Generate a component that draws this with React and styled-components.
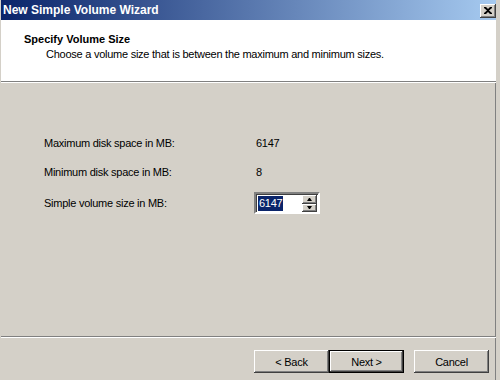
import styled, { createGlobalStyle } from "styled-components";

const GlobalStyle = createGlobalStyle`
  html, body {
    margin: 0;
    padding: 0;
    background: #d4d0c8;
  }
  body {
    font-family: "Liberation Sans", Arial, sans-serif;
    font-size: 11px;
    letter-spacing: -0.25px;
  }
`;

const rows = [
  { label: "Maximum disk space in MB:", value: "6147" },
  { label: "Minimum disk space in MB:", value: "8" },
];

function SpinArrow({ up }) {
  return (
    <svg width="5" height="3" viewBox="0 0 5 3">
      <path d={up ? "M2 0 L3 0 L5 3 L0 3 Z" : "M0 0 L5 0 L3 3 L2 3 Z"} fill="#000" />
    </svg>
  );
}

function App() {
  return (
    <>
      <GlobalStyle />
      <Window>
        <TitleBar>
          <span>New Simple Volume Wizard</span>
          <CloseButton>
            <svg width="8" height="7" viewBox="0 0 8 7">
              <path
                d="M0 0h2l2 2 2-2h2v1L5 3.5 8 6v1H6L4 5 2 7H0V6l3-2.5L0 1z"
                fill="#000"
              />
            </svg>
          </CloseButton>
        </TitleBar>
        <Header>
          <HeaderTitle>Specify Volume Size</HeaderTitle>
          <HeaderText>
            Choose a volume size that is between the maximum and minimum sizes.
          </HeaderText>
        </Header>
        <Etched />
        <Body>
          {rows.map((r) => (
            <Row key={r.label}>
              <Label>{r.label}</Label>
              <Value>{r.value}</Value>
            </Row>
          ))}
          <Row>
            <Label $offset={2}>Simple volume size in MB:</Label>
            <SpinBox>
              <Field>
                <Selected>6147</Selected>
              </Field>
              <SpinButtons>
                <SpinButton>
                  <SpinArrow up />
                </SpinButton>
                <SpinButton>
                  <SpinArrow />
                </SpinButton>
              </SpinButtons>
            </SpinBox>
          </Row>
        </Body>
        <Etched />
        <Footer>
          <Button>&lt; Back</Button>
          <Button $default>Next &gt;</Button>
          <Button $gap>Cancel</Button>
        </Footer>
      </Window>
    </>
  );
}

export default App;

const Window = styled.div`
  width: 500px;
  height: 380px;
  box-sizing: border-box;
  display: flex;
  flex-direction: column;
  background: #d4d0c8;
  border-left: 1px solid #d4d0c8;
  border-right: 4px solid #d4d0c8;
  box-shadow: inset -1px 0 0 #808080;
  overflow: hidden;
`;

const TitleBar = styled.div`
  height: 20px;
  display: flex;
  align-items: center;
  justify-content: space-between;
  padding: 0 0 0 2px;
  margin-right: -1px;
  background: linear-gradient(to right, #0a246a, #a6caf0);
  color: #fff;
  font-family: "Liberation Sans", Arial, sans-serif;
  font-weight: bold;
  font-size: 12px;
  letter-spacing: 0;
`;

const CloseButton = styled.div`
  width: 16px;
  height: 14px;
  box-sizing: border-box;
  margin: 1px 1px 0 0;
  display: flex;
  align-items: center;
  justify-content: center;
  background: #d4d0c8;
  box-shadow: inset -1px -1px 0 #404040, inset 1px 1px 0 #fff,
    inset -2px -2px 0 #808080;
`;

const Header = styled.div`
  height: 61px;
  box-sizing: border-box;
  background: #fff;
  padding: 13px 0 0 23px;
`;

const HeaderTitle = styled.div`
  font-weight: bold;
  font-size: 11px;
  line-height: 13px;
  letter-spacing: 0;
  color: #000;
`;

const HeaderText = styled.div`
  margin: 2px 0 0 22px;
  line-height: 13px;
  color: #000;
`;

const Etched = styled.div`
  height: 1px;
  background: #808080;
  border-bottom: 1px solid #fff;
`;

const Body = styled.div`
  flex: 1;
  display: flex;
  flex-direction: column;
  gap: 16px;
  padding: 54px 0 0 43px;
`;

const Row = styled.div`
  display: grid;
  grid-template-columns: 210px auto;
  align-items: start;
  line-height: 13px;
  color: #000;
`;

const Label = styled.div`
  margin-top: ${(p) => p.$offset || 0}px;
`;

const Value = styled.div`
  padding-left: 2px;
`;

const SpinBox = styled.div`
  width: 66px;
  height: 22px;
  box-sizing: border-box;
  display: flex;
  align-items: stretch;
  background: #fff;
  border: 2px solid;
  border-color: #808080 #fff #fff #808080;
  box-shadow: inset 1px 1px 0 #404040;
  padding: 1px 1px 0 2px;
  margin-top: -3px;
`;

const Field = styled.div`
  flex: 1;
  display: flex;
  align-items: center;
`;

const Selected = styled.span`
  background: #0a246a;
  color: #fff;
  line-height: 15px;
  padding: 0 1px;
`;

const SpinButtons = styled.div`
  width: 15px;
  display: flex;
  flex-direction: column;
`;

const SpinButton = styled.div`
  flex: 1;
  display: flex;
  align-items: center;
  justify-content: center;
  background: #d4d0c8;
  box-shadow: inset -1px -1px 0 #404040, inset 1px 1px 0 #fff,
    inset -2px -2px 0 #808080;
`;

const Footer = styled.div`
  height: 42px;
  box-sizing: border-box;
  display: flex;
  justify-content: flex-end;
  align-items: flex-start;
  padding: 12px 7px 0 0;
`;

const Button = styled.div`
  width: 75px;
  height: 23px;
  box-sizing: border-box;
  margin-left: ${(p) => (p.$gap ? 10 : 0)}px;
  display: flex;
  align-items: center;
  justify-content: center;
  background: #d4d0c8;
  color: #000;
  border: ${(p) => (p.$default ? "1px solid #000" : "none")};
  box-shadow: inset -1px -1px 0 #404040, inset 1px 1px 0 #fff,
    inset -2px -2px 0 #808080;
`;
